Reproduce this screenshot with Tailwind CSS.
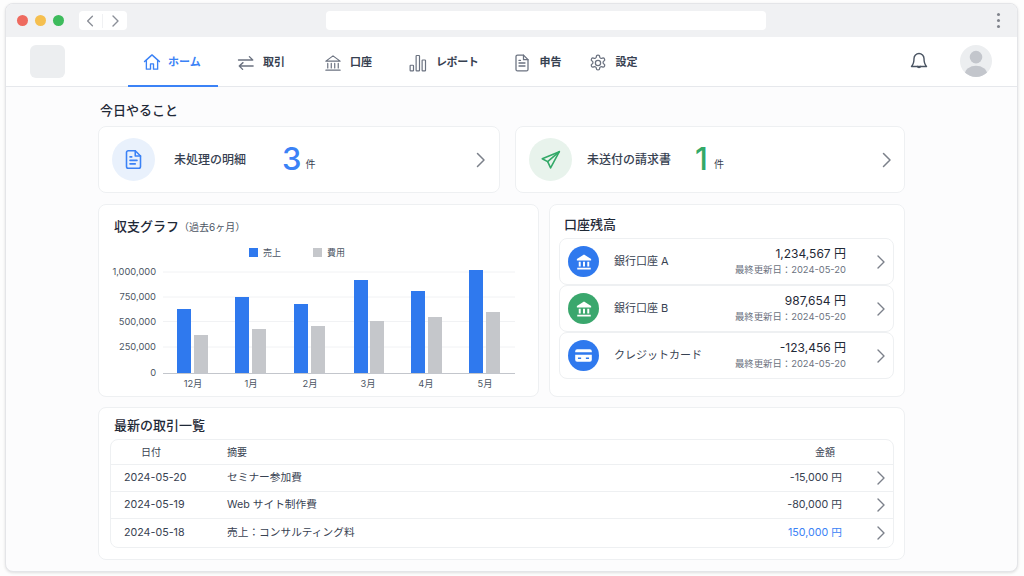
<!DOCTYPE html>
<html lang="ja">
<head>
    <meta charset="UTF-8">
    <title>ホーム</title>
    <script src="https://cdn.jsdelivr.net/npm/@tailwindcss/browser@4"></script>
</head>
<body class="bg-white font-['Inter','Noto_Sans_CJK_JP',sans-serif] text-[#374151] overflow-hidden">
    <div class="w-[1024px] h-[576px] pt-[3px] pb-[4px] pl-[5px] pr-[6px] bg-[#fdfdfd]">
        <div class="h-full flex flex-col rounded-lg overflow-hidden bg-[#fcfcfd] border border-[#e4e5e8] shadow-[0_1px_3px_rgba(0,0,0,0.12)]">

            <!-- browser bar -->
            <div class="h-[33px] shrink-0 bg-[#f0f1f3] flex items-center pl-[11px] pr-[17px]">
                <div class="w-[11px] h-[11px] rounded-full bg-[#ee6a5f]"></div>
                <div class="w-[11px] h-[11px] rounded-full bg-[#f5bf4f] ml-[7px]"></div>
                <div class="w-[11px] h-[11px] rounded-full bg-[#3dbb5c] ml-[7px]"></div>
                <div class="ml-[15px] w-[48px] h-[19px] bg-white rounded flex items-center text-[#8b8f98]">
                    <svg class="w-6 h-[14px] border-r border-[#f0f1f3]" viewBox="0 0 24 14" fill="none" stroke="currentColor" stroke-width="1.4" stroke-linecap="round" stroke-linejoin="round"><path d="M14 2l-5 5 5 5"/></svg>
                    <svg class="w-6 h-[14px]" viewBox="0 0 24 14" fill="none" stroke="currentColor" stroke-width="1.4" stroke-linecap="round" stroke-linejoin="round"><path d="M10 2l5 5-5 5"/></svg>
                </div>
                <div class="ml-[199px] w-[440px] h-[19px] bg-white rounded"></div>
                <div class="ml-auto flex flex-col gap-[3px]">
                    <div class="w-[3px] h-[3px] rounded-full bg-[#7f838b]"></div>
                    <div class="w-[3px] h-[3px] rounded-full bg-[#7f838b]"></div>
                    <div class="w-[3px] h-[3px] rounded-full bg-[#7f838b]"></div>
                </div>
            </div>

            <!-- app header -->
            <header class="h-[50px] shrink-0 bg-white border-b border-[#e6e8ec] flex items-stretch text-[11px] font-semibold pl-[24px] pr-[25px]">
                <div class="w-[35px] h-[33px] mt-[8px] rounded-md bg-[#eceef0]"></div>
                <nav class="flex items-stretch ml-[63px]">
                    <a class="flex items-center gap-[7px] pl-[15px] pt-[2px] w-[90px] text-[#3b82f6] border-b-2 border-[#3b82f6] -mb-px">
                        <svg class="w-[18px] h-[18px] shrink-0" viewBox="0 0 24 24" fill="none" stroke="currentColor" stroke-width="1.8" stroke-linecap="round" stroke-linejoin="round"><path d="M2 11.500L12 2.500l10 9"/><path d="M4.500 9.500V21.500h5.500v-7h4v7h5.500V9.500"/></svg>
                        <span>ホーム</span>
                    </a>
                    <a class="flex items-center gap-2 ml-[19px] pt-[2px]">
                        <svg class="w-[18px] h-[18px] shrink-0 text-[#6b7280]" viewBox="0 0 24 24" fill="none" stroke="currentColor" stroke-width="1.8" stroke-linecap="round" stroke-linejoin="round"><path d="M2 8h19M16.500 3.500L21 8M21.500 16H3M8 11.500L3 16 7.500 20.500"/></svg>
                        <span>取引</span>
                    </a>
                    <a class="flex items-center gap-2 ml-[39px] pt-[2px]">
                        <svg class="w-[18px] h-[18px] shrink-0 text-[#6b7280]" viewBox="0 0 24 24" fill="none" stroke="currentColor" stroke-width="1.6" stroke-linecap="round" stroke-linejoin="round"><path d="M2.500 9.500L12 2.500l9.500 7zM5 12.500v6M9.700 12.500v6M14.300 12.500v6M19 12.500v6M2.500 21.500h19"/></svg>
                        <span>口座</span>
                    </a>
                    <a class="flex items-center gap-[9px] ml-[37px] pt-[2px]">
                        <svg class="w-[18px] h-[18px] shrink-0 text-[#6b7280]" viewBox="0 0 24 24" fill="none" stroke="currentColor" stroke-width="1.6" stroke-linejoin="round"><rect x="1.500" y="15" width="4.500" height="7.500" rx="0.800"/><rect x="9.500" y="2" width="4.500" height="20.500" rx="0.800"/><rect x="17.500" y="8" width="4.500" height="14.500" rx="0.800"/></svg>
                        <span class="tracking-[-0.4px]">レポート</span>
                    </a>
                    <a class="flex items-center gap-2 ml-[35px] pt-[2px]">
                        <svg class="w-[18px] h-[18px] shrink-0 text-[#6b7280]" viewBox="0 0 24 24" fill="none" stroke="currentColor" stroke-width="1.7" stroke-linecap="round" stroke-linejoin="round"><path d="M14 1.500H6a2 2 0 0 0-2 2v17a2 2 0 0 0 2 2h12a2 2 0 0 0 2-2V7.500z"/><path d="M14 1.500v6h6M8 12h8M8 16h8M8 8.500h2"/></svg>
                        <span>申告</span>
                    </a>
                    <a class="flex items-center gap-2 ml-[28px] pt-[2px]">
                        <svg class="w-[18px] h-[18px] shrink-0 text-[#6b7280]" viewBox="0 0 24 24" fill="none" stroke="currentColor" stroke-width="1.7" stroke-linecap="round" stroke-linejoin="round"><circle cx="12" cy="12" r="3.500"/><path d="M12.200 1.500h-.4a2 2 0 0 0-2 2v.2a2 2 0 0 1-1 1.700l-.4.200a2 2 0 0 1-2 0l-.2-.1a2 2 0 0 0-2.700.7l-.2.400a2 2 0 0 0 .7 2.700l.2.100a2 2 0 0 1 1 1.700v.5a2 2 0 0 1-1 1.700l-.2.100a2 2 0 0 0-.7 2.700l.2.400a2 2 0 0 0 2.700.7l.2-.1a2 2 0 0 1 2 0l.4.200a2 2 0 0 1 1 1.700v.2a2 2 0 0 0 2 2h.4a2 2 0 0 0 2-2v-.2a2 2 0 0 1 1-1.700l.4-.2a2 2 0 0 1 2 0l.2.100a2 2 0 0 0 2.700-.7l.2-.4a2 2 0 0 0-.7-2.700l-.2-.1a2 2 0 0 1-1-1.700v-.5a2 2 0 0 1 1-1.700l.2-.1a2 2 0 0 0 .7-2.700l-.2-.4a2 2 0 0 0-2.700-.7l-.2.100a2 2 0 0 1-2 0l-.4-.2a2 2 0 0 1-1-1.700v-.2a2 2 0 0 0-2-2z"/></svg>
                        <span>設定</span>
                    </a>
                </nav>
                <div class="ml-auto flex items-center gap-[31px] pb-px">
                    <svg class="w-5 h-5 text-[#4b5563]" viewBox="0 0 24 24" fill="none" stroke="currentColor" stroke-width="1.700" stroke-linecap="round" stroke-linejoin="round"><path d="M6 9a6 6 0 0 1 12 0c0 6 1.500 8 3 9.500H3C4.500 17 6 15 6 9z"/><path d="M10 18.500a2.200 2.200 0 0 0 4 0"/></svg>
                    <svg class="w-8 h-8" viewBox="0 0 33 33"><defs><clipPath id="avatar"><circle cx="16.500" cy="16.500" r="16.500"/></clipPath></defs><circle cx="16.500" cy="16.500" r="16.500" fill="#eceef0"/><g clip-path="url(#avatar)" fill="#c3c6cc"><circle cx="16.500" cy="12.500" r="6.500"/><ellipse cx="16.500" cy="30" rx="11.500" ry="8.500"/></g></svg>
                </div>
            </header>

            <!-- content -->
            <main class="w-[807px] ml-[92px] flex flex-col">
                <h2 class="text-[13px] leading-5 font-medium text-[#1f2937] mt-[13px] ml-[2px]">今日やること</h2>

                <div class="flex gap-[15px] mt-[6px]">
                    <div class="w-[402px] h-[67px] bg-white rounded-lg border border-[#eef0f2] flex items-center pl-[13px] pr-[11px]">
                        <div class="w-[43px] h-[43px] rounded-full bg-[#e9f1fc] flex items-center justify-center text-[#3b82f6]">
                            <svg class="w-[21px] h-[21px]" viewBox="0 0 24 24" fill="none" stroke="currentColor" stroke-width="1.800" stroke-linecap="round" stroke-linejoin="round"><path d="M14 2H6a2 2 0 0 0-2 2v16a2 2 0 0 0 2 2h12a2 2 0 0 0 2-2V8z"/><path d="M14 2v6h6M8 13h8M8 17h6M8 9h2"/></svg>
                        </div>
                        <span class="ml-[19px] w-[108px] text-xs font-medium">未処理の明細</span>
                        <span class="text-[#3b82f6] text-[31px] leading-none font-medium -mt-[3px]">3</span>
                        <span class="ml-[4px] mt-[10px] text-[10px]">件</span>
                        <svg class="ml-auto w-[14px] h-[18px] text-[#7b808a]" viewBox="0 0 14 18" fill="none" stroke="currentColor" stroke-width="1.500" stroke-linecap="round" stroke-linejoin="round"><path d="M3.500 2.500L10 9l-6.500 6.500"/></svg>
                    </div>
                    <div class="w-[390px] h-[67px] bg-white rounded-lg border border-[#eef0f2] flex items-center pl-[13px] pr-[10px]">
                        <div class="w-[43px] h-[43px] rounded-full bg-[#e8f3ec] flex items-center justify-center text-[#33a968]">
                            <svg class="w-[20px] h-[20px]" viewBox="0 0 24 24" fill="none" stroke="currentColor" stroke-width="1.900" stroke-linecap="round" stroke-linejoin="round"><path d="M22 2L1.500 10.500l6.500 3.500 3.500 7.500z"/><path d="M22 2L8 14"/></svg>
                        </div>
                        <span class="ml-[15px] w-[108px] text-xs font-medium">未送付の請求書</span>
                        <span class="text-[#33a968] text-[31px] leading-none font-medium -mt-[3px]">1</span>
                        <span class="ml-[6px] mt-[10px] text-[10px]">件</span>
                        <svg class="ml-auto w-[14px] h-[18px] text-[#7b808a]" viewBox="0 0 14 18" fill="none" stroke="currentColor" stroke-width="1.500" stroke-linecap="round" stroke-linejoin="round"><path d="M3.500 2.500L10 9l-6.500 6.500"/></svg>
                    </div>
                </div>

                <div class="flex gap-[10px] mt-[11px]">
                    <!-- chart -->
                    <section class="w-[441px] h-[193px] bg-white rounded-lg border border-[#eef0f2] overflow-hidden">
                        <h3 class="pl-[15px] pt-[12px] text-[13px] leading-[18px] font-medium text-[#1f2937]">収支グラフ<span class="text-[10px] font-normal text-[#4b5563]">（過去6ヶ月）</span></h3>
                        <svg class="block mt-[5px]" width="439" height="157" viewBox="99 239 439 157" font-size="9.300" fill="#4b5563">
                            <rect x="249" y="246" width="9" height="9" fill="#2f79ee"/><text x="263" y="254" font-size="9">売上</text>
                            <rect x="313" y="246" width="9" height="9" fill="#c5c7cb"/><text x="327" y="254" font-size="9">費用</text>
                            <g stroke="#f1f2f4" stroke-width="1"><path d="M163 270H515M163 295H515M163 319.500H515M163 345H515"/></g>
                            <g text-anchor="end"><text x="156" y="273">1,000,000</text><text x="156" y="298">750,000</text><text x="156" y="323">500,000</text><text x="156" y="348">250,000</text><text x="156" y="374">0</text></g>
                            <g fill="#2f79ee">
                                <rect x="177" y="307" width="14" height="64"/><rect x="235" y="295" width="14" height="76"/><rect x="294" y="302" width="14" height="69"/>
                                <rect x="354" y="278" width="14" height="93"/><rect x="411" y="289" width="14" height="82"/><rect x="469" y="268" width="14" height="103"/>
                            </g>
                            <g fill="#c5c7cb">
                                <rect x="194" y="333" width="14" height="38"/><rect x="252" y="327" width="14" height="44"/><rect x="311" y="324" width="14" height="47"/>
                                <rect x="370" y="319" width="14" height="52"/><rect x="428" y="315" width="14" height="56"/><rect x="486" y="310" width="14" height="61"/>
                            </g>
                            <path d="M163 371.500H515" stroke="#c3c6cc" stroke-width="1"/>
                            <g text-anchor="middle"><text x="193" y="385">12月</text><text x="251" y="385">1月</text><text x="310" y="385">2月</text><text x="368" y="385">3月</text><text x="426" y="385">4月</text><text x="485" y="385">5月</text></g>
                        </svg>
                    </section>

                    <!-- accounts -->
                    <section class="w-[356px] h-[193px] bg-white rounded-lg border border-[#eef0f2] pl-[9px] pr-[10px]">
                        <h3 class="pl-[5px] pt-[10px] text-[13px] leading-[18px] font-medium text-[#1f2937]">口座残高</h3>
                        <div class="mt-[5px] flex flex-col">
                            <div class="h-[47px] rounded-lg border border-[#eef0f2] flex items-center pl-[8px] pr-[6px]">
                                <div class="w-[31px] h-[31px] rounded-full bg-[#2f79ee] flex items-center justify-center text-white">
                                    <svg class="w-[18px] h-[18px]" viewBox="0 0 24 24" fill="currentColor"><path d="M12 2L2.500 8v2h19V8zM5 11.500h2.600v6.500H5zM10.700 11.500h2.600v6.500h-2.600zM16.400 11.500H19v6.500h-2.600zM3 19.500h18V22H3z"/></svg>
                                </div>
                                <span class="ml-[15px] text-[11px]">銀行口座 A</span>
                                <div class="ml-auto text-right">
                                    <div class="text-xs leading-4 text-[#1f2937] pt-[1px]">1,234,567 円</div>
                                    <div class="text-[9.400px] leading-4 text-[#6b7280]">最終更新日：2024-05-20</div>
                                </div>
                                <svg class="ml-[29px] w-[12px] h-[16px] text-[#7b808a]" viewBox="0 0 12 16" fill="none" stroke="currentColor" stroke-width="1.400" stroke-linecap="round" stroke-linejoin="round"><path d="M3 2l6 6-6 6"/></svg>
                            </div>
                            <div class="h-[47px] rounded-lg border border-[#eef0f2] flex items-center pl-[8px] pr-[6px]">
                                <div class="w-[31px] h-[31px] rounded-full bg-[#3aa76d] flex items-center justify-center text-white">
                                    <svg class="w-[18px] h-[18px]" viewBox="0 0 24 24" fill="currentColor"><path d="M12 2L2.500 8v2h19V8zM5 11.500h2.600v6.500H5zM10.700 11.500h2.600v6.500h-2.600zM16.400 11.500H19v6.500h-2.600zM3 19.500h18V22H3z"/></svg>
                                </div>
                                <span class="ml-[15px] text-[11px]">銀行口座 B</span>
                                <div class="ml-auto text-right">
                                    <div class="text-xs leading-4 text-[#1f2937] pt-[1px]">987,654 円</div>
                                    <div class="text-[9.400px] leading-4 text-[#6b7280]">最終更新日：2024-05-20</div>
                                </div>
                                <svg class="ml-[29px] w-[12px] h-[16px] text-[#7b808a]" viewBox="0 0 12 16" fill="none" stroke="currentColor" stroke-width="1.400" stroke-linecap="round" stroke-linejoin="round"><path d="M3 2l6 6-6 6"/></svg>
                            </div>
                            <div class="h-[47px] rounded-lg border border-[#eef0f2] flex items-center pl-[8px] pr-[6px]">
                                <div class="w-[31px] h-[31px] rounded-full bg-[#2f79ee] flex items-center justify-center text-white">
                                    <svg class="w-[19px] h-[19px]" viewBox="0 0 24 24" fill="currentColor"><path fill-rule="evenodd" d="M4 4h16a2.500 2.500 0 0 1 2.500 2.500V8h-21V6.500A2.500 2.500 0 0 1 4 4zM1.500 11h21v6.500A2.500 2.500 0 0 1 20 20H4a2.500 2.500 0 0 1-2.500-2.500zM5 14.500v2h4v-2zM15 14.500v2h4v-2z"/></svg>
                                </div>
                                <span class="ml-[15px] text-[11px]">クレジットカード</span>
                                <div class="ml-auto text-right">
                                    <div class="text-xs leading-4 text-[#1f2937] pt-[1px]">-123,456 円</div>
                                    <div class="text-[9.400px] leading-4 text-[#6b7280]">最終更新日：2024-05-20</div>
                                </div>
                                <svg class="ml-[29px] w-[12px] h-[16px] text-[#7b808a]" viewBox="0 0 12 16" fill="none" stroke="currentColor" stroke-width="1.400" stroke-linecap="round" stroke-linejoin="round"><path d="M3 2l6 6-6 6"/></svg>
                            </div>
                        </div>
                    </section>
                </div>

                <!-- transactions -->
                <section class="mt-[10px] h-[153px] bg-white rounded-lg border border-[#eef0f2] pl-[11px] pr-[10px]">
                    <h3 class="pl-[4px] pt-[8px] text-[13px] leading-[18px] font-medium text-[#1f2937]">最新の取引一覧</h3>
                    <div class="mt-[5px] rounded-lg border border-[#eef0f2] text-[10.700px]">
                        <div class="h-[25px] grid grid-cols-[116px_1fr_92px_51px] items-center border-b border-[#eef0f2] text-[10px]">
                            <span class="pl-[30px]">日付</span>
                            <span>摘要</span>
                            <span class="text-right pr-[7px]">金額</span>
                            <span></span>
                        </div>
                        <div class="h-[27px] grid grid-cols-[116px_1fr_92px_51px] items-center border-b border-[#eef0f2]">
                            <span class="pl-[13px]">2024-05-20</span>
                            <span>セミナー参加費</span>
                            <span class="text-right">-15,000 円</span>
                            <svg class="ml-[33px] w-[12px] h-[16px] text-[#7b808a]" viewBox="0 0 12 16" fill="none" stroke="currentColor" stroke-width="1.400" stroke-linecap="round" stroke-linejoin="round"><path d="M3 2l6 6-6 6"/></svg>
                        </div>
                        <div class="h-[27px] grid grid-cols-[116px_1fr_92px_51px] items-center border-b border-[#eef0f2]">
                            <span class="pl-[13px]">2024-05-19</span>
                            <span>Web サイト制作費</span>
                            <span class="text-right">-80,000 円</span>
                            <svg class="ml-[33px] w-[12px] h-[16px] text-[#7b808a]" viewBox="0 0 12 16" fill="none" stroke="currentColor" stroke-width="1.400" stroke-linecap="round" stroke-linejoin="round"><path d="M3 2l6 6-6 6"/></svg>
                        </div>
                        <div class="h-[28px] grid grid-cols-[116px_1fr_92px_51px] items-center">
                            <span class="pl-[13px]">2024-05-18</span>
                            <span>売上：コンサルティング料</span>
                            <span class="text-right text-[#3b82f6]">150,000 円</span>
                            <svg class="ml-[33px] w-[12px] h-[16px] text-[#7b808a]" viewBox="0 0 12 16" fill="none" stroke="currentColor" stroke-width="1.400" stroke-linecap="round" stroke-linejoin="round"><path d="M3 2l6 6-6 6"/></svg>
                        </div>
                    </div>
                </section>
            </main>
        </div>
    </div>
</body>
</html>
